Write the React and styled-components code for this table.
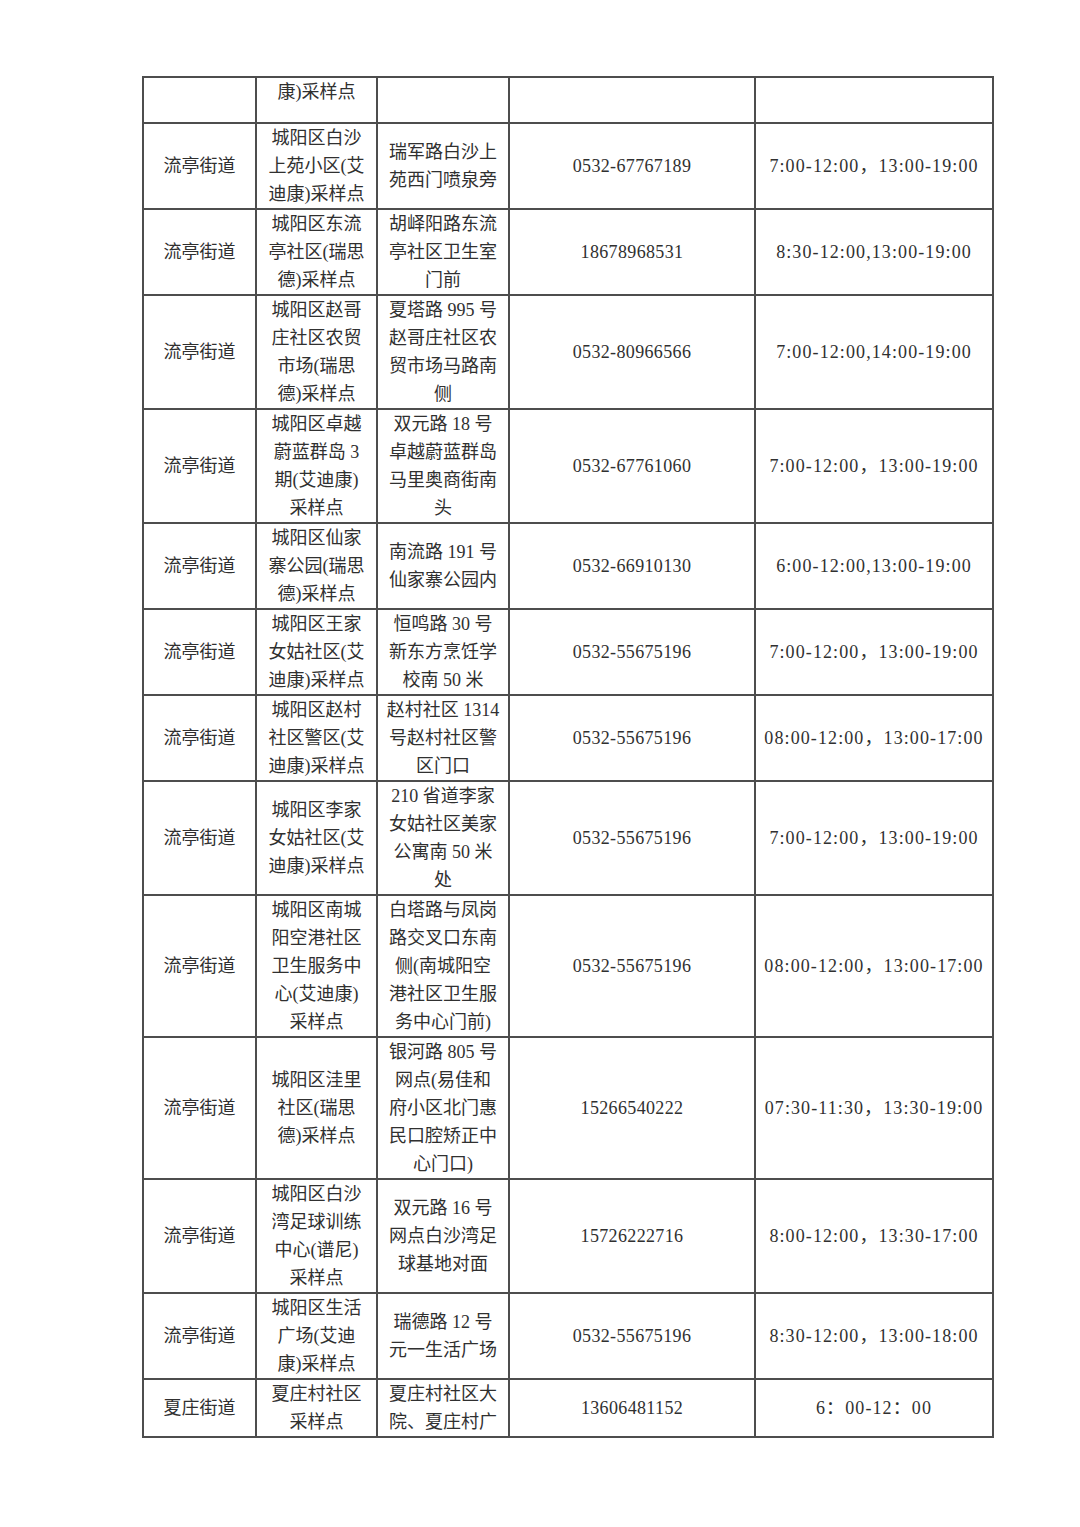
import React from "react";
import styled, { createGlobalStyle } from "styled-components";

const Global = createGlobalStyle`
  html, body { margin: 0; padding: 0; background: #ffffff; }
  body { font-family: "Liberation Serif", "Noto Sans CJK SC", serif; }
`;

const Page = styled.div`
  width: 1080px;
  min-height: 1527px;
  box-sizing: border-box;
  padding: 76px 0 0 142px;
  background: #ffffff;
`;

const Table = styled.table`
  border-collapse: collapse;
  table-layout: fixed;
  width: 852px;
  color: #303030;
  font-size: 18px;
  line-height: 28px;
`;

const Cell = styled.td`
  border: 2px solid #4d4d4d;
  padding: 0;
  text-align: center;
  vertical-align: ${(p) => (p.$top ? "top" : "middle")};
  height: ${(p) => (p.$h ? `${p.$h}px` : "auto")};
  letter-spacing: ${(p) => p.$spacing || "0"};
`;

const Line = styled.span`
  display: block;
  white-space: nowrap;
`;

const rows = [
  ["流亭街道", ["城阳区白沙", "上苑小区(艾", "迪康)采样点"], ["瑞军路白沙上", "苑西门喷泉旁"], "0532-67767189", "7:00-12:00，13:00-19:00"],
  ["流亭街道", ["城阳区东流", "亭社区(瑞思", "德)采样点"], ["胡峄阳路东流", "亭社区卫生室", "门前"], "18678968531", "8:30-12:00,13:00-19:00"],
  ["流亭街道", ["城阳区赵哥", "庄社区农贸", "市场(瑞思", "德)采样点"], ["夏塔路 995 号", "赵哥庄社区农", "贸市场马路南", "侧"], "0532-80966566", "7:00-12:00,14:00-19:00"],
  ["流亭街道", ["城阳区卓越", "蔚蓝群岛 3", "期(艾迪康)", "采样点"], ["双元路 18 号", "卓越蔚蓝群岛", "马里奥商街南", "头"], "0532-67761060", "7:00-12:00，13:00-19:00"],
  ["流亭街道", ["城阳区仙家", "寨公园(瑞思", "德)采样点"], ["南流路 191 号", "仙家寨公园内"], "0532-66910130", "6:00-12:00,13:00-19:00"],
  ["流亭街道", ["城阳区王家", "女姑社区(艾", "迪康)采样点"], ["恒鸣路 30 号", "新东方烹饪学", "校南 50 米"], "0532-55675196", "7:00-12:00，13:00-19:00"],
  ["流亭街道", ["城阳区赵村", "社区警区(艾", "迪康)采样点"], ["赵村社区 1314", "号赵村社区警", "区门口"], "0532-55675196", "08:00-12:00，13:00-17:00"],
  ["流亭街道", ["城阳区李家", "女姑社区(艾", "迪康)采样点"], ["210 省道李家", "女姑社区美家", "公寓南 50 米", "处"], "0532-55675196", "7:00-12:00，13:00-19:00"],
  ["流亭街道", ["城阳区南城", "阳空港社区", "卫生服务中", "心(艾迪康)", "采样点"], ["白塔路与凤岗", "路交叉口东南", "侧(南城阳空", "港社区卫生服", "务中心门前)"], "0532-55675196", "08:00-12:00，13:00-17:00"],
  ["流亭街道", ["城阳区洼里", "社区(瑞思", "德)采样点"], ["银河路 805 号", "网点(易佳和", "府小区北门惠", "民口腔矫正中", "心门口)"], "15266540222", "07:30-11:30，13:30-19:00"],
  ["流亭街道", ["城阳区白沙", "湾足球训练", "中心(谱尼)", "采样点"], ["双元路 16 号", "网点白沙湾足", "球基地对面"], "15726222716", "8:00-12:00，13:30-17:00"],
  ["流亭街道", ["城阳区生活", "广场(艾迪", "康)采样点"], ["瑞德路 12 号", "元一生活广场"], "0532-55675196", "8:30-12:00，13:00-18:00"],
  ["夏庄街道", ["夏庄村社区", "采样点"], ["夏庄村社区大", "院、夏庄村广"], "13606481152", "6：00-12：00"],
];

const spacings = ["0", "0", "0", "0.35px", "1.1px"];

const Lines = ({ value }) =>
  (Array.isArray(value) ? value : [value]).map((t, i) => <Line key={i}>{t}</Line>);

export default function App() {
  return (
    <>
      <Global />
      <Page>
        <Table>
          <colgroup>
            <col style={{ width: 113 }} />
            <col style={{ width: 121 }} />
            <col style={{ width: 132 }} />
            <col style={{ width: 246 }} />
            <col style={{ width: 238 }} />
          </colgroup>
          <tbody>
            <tr>
              <Cell $h={44} />
              <Cell $h={44} $top>
                <Line>康)采样点</Line>
              </Cell>
              <Cell $h={44} />
              <Cell $h={44} />
              <Cell $h={44} />
            </tr>
            {rows.map((r, i) => (
              <tr key={i}>
                {r.map((c, j) => (
                  <Cell key={j} $spacing={spacings[j]}>
                    <Lines value={c} />
                  </Cell>
                ))}
              </tr>
            ))}
          </tbody>
        </Table>
      </Page>
    </>
  );
}
